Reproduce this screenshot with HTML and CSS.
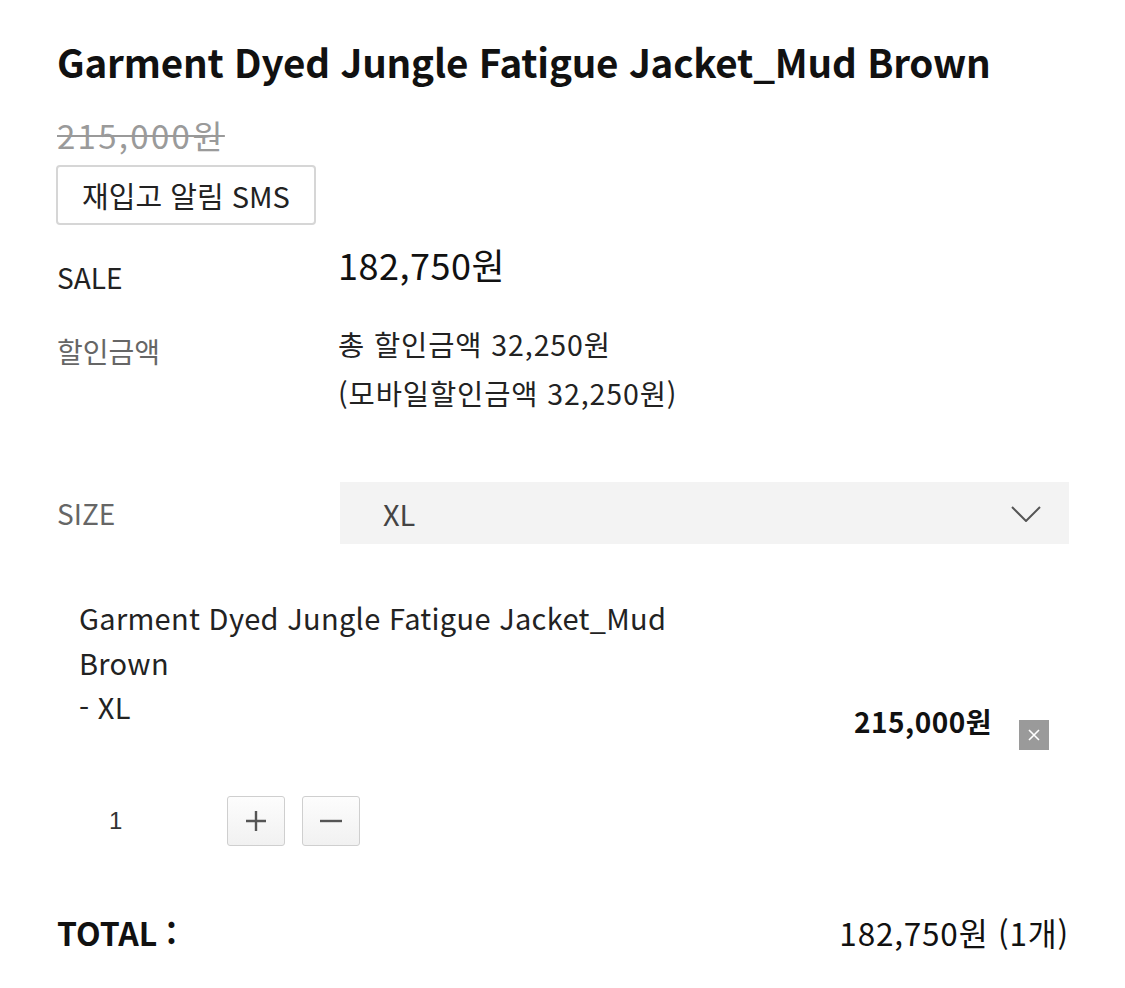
FILE: index.html
```html
<!DOCTYPE html>
<html lang="ko">
<head>
<meta charset="utf-8">
<link rel="stylesheet" href="styles.css">
</head>
<body>
<div class="page">
  <h1 class="title">Garment Dyed Jungle Fatigue Jacket_Mud Brown</h1>
  <div class="orig-price">215,000원</div>
  <button class="restock">재입고 알림 SMS</button>

  <div class="info">
    <div class="label sale-label">SALE</div>
    <div class="sale-value">182,750원</div>
    <div class="label gray disc-label">할인금액</div>
    <div class="disc-value">총 할인금액 32,250원<br>(모바일할인금액 32,250원)</div>
  </div>

  <div class="size-row">
    <div class="label gray">SIZE</div>
    <div class="select">
      <span>XL</span>
      <svg class="chev" width="30" height="16" viewBox="0 0 30 16"><path d="M1 1 L15 15 L29 1" fill="none" stroke="#555" stroke-width="2"/></svg>
    </div>
  </div>

  <div class="option">
    <div class="opt-name">Garment Dyed Jungle Fatigue Jacket_Mud<br>Brown<br>- XL</div>
    <div class="opt-price-row">
      <span class="opt-price">215,000원</span>
      <span class="del"><svg width="14" height="14" viewBox="0 0 14 14"><path d="M2 2 L12 12 M12 2 L2 12" stroke="#fff" stroke-width="1.6"/></svg></span>
    </div>
    <div class="qty-row">
      <span class="qty">1</span>
      <button class="qbtn"><svg width="24" height="24" viewBox="0 0 24 24"><path d="M12 2 V22 M2 12 H22" stroke="#555" stroke-width="2.4"/></svg></button>
      <button class="qbtn"><svg width="24" height="24" viewBox="0 0 24 24"><path d="M1 12 H23" stroke="#555" stroke-width="2.4"/></svg></button>
    </div>
  </div>

  <div class="total">
    <span class="total-label">TOTAL :</span>
    <span class="total-value">182,750원 (1개)</span>
  </div>
</div>
</body>
</html>
```

FILE: styles.css
```css
* { box-sizing: border-box; }
body {
  margin: 0;
  background: #fff;
  font-family: "Noto Sans CJK KR", "Noto Sans", sans-serif;
  color: #111;
}
.page {
  padding: 30px 56px 0 57px;
  width: 1125px;
}
.title {
  margin: 0;
  font-size: 38.6px;
  font-weight: 700;
  line-height: 62px;
  letter-spacing: -0.2px;
  color: #111;
}
.orig-price {
  margin-top: 23px;
  font-size: 33px;
  line-height: 40px;
  letter-spacing: 2.3px;
  color: #9a9a9a;
  text-decoration: line-through;
  text-decoration-thickness: 2px;
}
.restock {
  display: block;
  margin-top: 10px;
  margin-left: -1px;
  width: 260px;
  height: 60px;
  border: 2px solid #d6d6d6;
  border-radius: 4px;
  background: #fff;
  font-family: inherit;
  font-size: 29px;
  color: #222;
  padding: 0;
}
.info {
  display: grid;
  grid-template-columns: 281px 1fr;
  row-gap: 22px;
  margin-top: 18px;
}
.label {
  font-size: 28px;
  color: #222;
}
.gray { color: #666; }
.sale-label { line-height: 40px; padding-top: 14px; }
.sale-value { font-size: 36px; line-height: 42px; letter-spacing: 0.5px; color: #111; }
.disc-label { line-height: 40px; padding-top: 12px; }
.disc-value { font-size: 28.5px; line-height: 49px; letter-spacing: 0.9px; color: #222; }
.size-row {
  display: grid;
  grid-template-columns: 283px 729px;
  align-items: center;
  margin-top: 65px;
}
.select {
  height: 62px;
  background: #f3f3f3;
  display: flex;
  align-items: center;
  justify-content: space-between;
  padding: 0 28px 0 43px;
  font-size: 29px;
  color: #444;
}
.chev { margin-top: 2px; }
.option {
  padding-left: 22px;
  margin-top: 51px;
}
.opt-name {
  font-size: 29px;
  line-height: 44.5px;
  letter-spacing: 0.3px;
  color: #222;
}
.opt-price-row {
  display: flex;
  justify-content: flex-end;
  align-items: flex-start;
  gap: 27px;
  padding-right: 20px;
  margin-top: -28px;
}
.opt-price {
  font-size: 28px;
  font-weight: 700;
  line-height: 40px;
  letter-spacing: 0.5px;
}
.del {
  width: 30px;
  height: 30px;
  margin-top: 19px;
  background: #9a9a9a;
  display: flex;
  align-items: center;
  justify-content: center;
}
.qty-row {
  display: flex;
  align-items: center;
  gap: 17px;
  margin-top: 46px;
}
.qty {
  width: 131px;
  padding-left: 30px;
  font-family: "Liberation Sans", sans-serif;
  font-size: 24px;
  color: #333;
}
.qbtn {
  width: 58px;
  height: 50px;
  border: 1px solid #cfcfcf;
  border-radius: 3px;
  background: linear-gradient(#fdfdfd, #f1f1f1);
  display: flex;
  align-items: center;
  justify-content: center;
  padding: 0;
}
.total {
  display: flex;
  justify-content: space-between;
  align-items: center;
  margin-top: 63px;
}
.total-label {
  font-size: 32px;
  font-weight: 700;
  color: #111;
}
.total-value {
  font-size: 31.5px;
  letter-spacing: 0.8px;
  color: #111;
}
```
